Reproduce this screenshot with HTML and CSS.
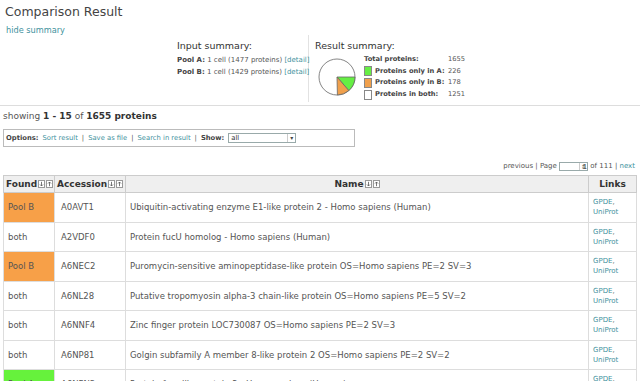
FILE: index.html
```html
<!DOCTYPE html>
<html>
<head>
<link rel="stylesheet" href="styles.css">
<title>Comparison Result</title>
</head>
<body>
<h1 class="title">Comparison Result</h1>
<a class="toggle" href="#">hide summary</a>

<div class="summary">
  <div class="input-summary">
    <h2>Input summary:</h2>
    <p><b>Pool A:</b> 1 cell (1477 proteins) <a href="#">[detail]</a></p>
    <p><b>Pool B:</b> 1 cell (1429 proteins) <a href="#">[detail]</a></p>
  </div>
  <div class="result-summary">
    <h2>Result summary:</h2>
    <div class="result-body">
      <svg class="pie" width="40" height="40" viewBox="0 0 40 40">
        <circle cx="20" cy="20" r="18" fill="#fff" stroke="#666" stroke-width="0.8"/>
        <path d="M20 20 L38 20 A18 18 0 0 1 31.8 33.6 Z" fill="#66ee44" stroke="#666" stroke-width="0.8"/>
        <path d="M20 20 L31.8 33.6 A18 18 0 0 1 20.4 38 Z" fill="#f0a04c" stroke="#666" stroke-width="0.8"/>
      </svg>
      <div class="legend">
        <span class="label">Total proteins:</span><span class="value">1655</span>
        <span class="label"><i class="swatch green"></i>Proteins only in A:</span><span class="value">226</span>
        <span class="label"><i class="swatch orange"></i>Proteins only in B:</span><span class="value">178</span>
        <span class="label"><i class="swatch white"></i>Proteins in both:</span><span class="value">1251</span>
      </div>
    </div>
  </div>
</div>

<div class="showing">showing <b>1 - 15</b> of <b>1655 proteins</b></div>

<div class="options">
  <b>Options:</b>
  <a href="#">Sort result</a><span class="sep">|</span>
  <a href="#">Save as file</a><span class="sep">|</span>
  <a href="#">Search in result</a><span class="sep">|</span>
  <b>Show:</b>
  <span class="select wide">all<span class="drop">&#9662;</span></span>
</div>

<div class="pager">
  previous | Page <span class="select small">1<span class="spin">&#8661;</span></span> of 111 | <a href="#">next</a>
</div>

<table class="results">
  <thead>
    <tr>
      <th class="col-found">Found<span class="sort"><svg width="7" height="8" viewBox="0 0 7 8"><rect x="0.5" y="0.5" width="6" height="7" fill="#fff" stroke="#999"/><path d="M3.5 1.8V6 M2 4.5L3.5 6L5 4.5" fill="none" stroke="#555" stroke-width="0.8"/></svg><svg width="7" height="8" viewBox="0 0 7 8"><rect x="0.5" y="0.5" width="6" height="7" fill="#fff" stroke="#999"/><path d="M3.5 6.2V2 M2 3.5L3.5 2L5 3.5" fill="none" stroke="#555" stroke-width="0.8"/></svg></span></th>
      <th class="col-acc">Accession<span class="sort"><svg width="7" height="8" viewBox="0 0 7 8"><rect x="0.5" y="0.5" width="6" height="7" fill="#fff" stroke="#999"/><path d="M3.5 1.8V6 M2 4.5L3.5 6L5 4.5" fill="none" stroke="#555" stroke-width="0.8"/></svg><svg width="7" height="8" viewBox="0 0 7 8"><rect x="0.5" y="0.5" width="6" height="7" fill="#fff" stroke="#999"/><path d="M3.5 6.2V2 M2 3.5L3.5 2L5 3.5" fill="none" stroke="#555" stroke-width="0.8"/></svg></span></th>
      <th class="col-name">Name<span class="sort"><svg width="7" height="8" viewBox="0 0 7 8"><rect x="0.5" y="0.5" width="6" height="7" fill="#fff" stroke="#999"/><path d="M3.5 1.8V6 M2 4.5L3.5 6L5 4.5" fill="none" stroke="#555" stroke-width="0.8"/></svg><svg width="7" height="8" viewBox="0 0 7 8"><rect x="0.5" y="0.5" width="6" height="7" fill="#fff" stroke="#999"/><path d="M3.5 6.2V2 M2 3.5L3.5 2L5 3.5" fill="none" stroke="#555" stroke-width="0.8"/></svg></span></th>
      <th class="col-links">Links</th>
    </tr>
  </thead>
  <tbody>
    <tr>
      <td class="pool-b">Pool B</td>
      <td class="acc">A0AVT1</td>
      <td>Ubiquitin-activating enzyme E1-like protein 2 - Homo sapiens (Human)</td>
      <td class="links"><a href="#">GPDE</a>,<br><a href="#">UniProt</a></td>
    </tr>
    <tr>
      <td>both</td>
      <td class="acc">A2VDF0</td>
      <td>Protein fucU homolog - Homo sapiens (Human)</td>
      <td class="links"><a href="#">GPDE</a>,<br><a href="#">UniProt</a></td>
    </tr>
    <tr>
      <td class="pool-b">Pool B</td>
      <td class="acc">A6NEC2</td>
      <td>Puromycin-sensitive aminopeptidase-like protein OS=Homo sapiens PE=2 SV=3</td>
      <td class="links"><a href="#">GPDE</a>,<br><a href="#">UniProt</a></td>
    </tr>
    <tr>
      <td>both</td>
      <td class="acc">A6NL28</td>
      <td>Putative tropomyosin alpha-3 chain-like protein OS=Homo sapiens PE=5 SV=2</td>
      <td class="links"><a href="#">GPDE</a>,<br><a href="#">UniProt</a></td>
    </tr>
    <tr>
      <td>both</td>
      <td class="acc">A6NNF4</td>
      <td>Zinc finger protein LOC730087 OS=Homo sapiens PE=2 SV=3</td>
      <td class="links"><a href="#">GPDE</a>,<br><a href="#">UniProt</a></td>
    </tr>
    <tr>
      <td>both</td>
      <td class="acc">A6NP81</td>
      <td>Golgin subfamily A member 8-like protein 2 OS=Homo sapiens PE=2 SV=2</td>
      <td class="links"><a href="#">GPDE</a>,<br><a href="#">UniProt</a></td>
    </tr>
    <tr>
      <td class="pool-a">Pool A</td>
      <td class="acc">A6NFN3</td>
      <td>Protein fam-like protein 2 - Homo sapiens (Human)</td>
      <td class="links"><a href="#">GPDE</a>,<br><a href="#">UniProt</a></td>
    </tr>
  </tbody>
</table>
</body>
</html>
```

FILE: styles.css
```css
body {
  margin: 0;
  font-family: "DejaVu Sans", Verdana, sans-serif;
  color: #555;
  background: #fff;
  overflow: hidden;
}

a {
  color: #3f929e;
  text-decoration: none;
}

.title {
  margin: 3px 0 0 5px;
  font-size: 12.5px;
  line-height: 18px;
  font-weight: normal;
  color: #444;
}

.toggle {
  display: block;
  margin: 3px 0 0 6px;
  font-size: 8.2px;
  line-height: 12px;
}

.summary {
  display: flex;
  margin: -1px 0 0 177px;
  height: 67px;
}

.summary h2 {
  margin: 5px 0 2px 0;
  font-size: 9.5px;
  line-height: 12px;
  font-weight: normal;
  color: #333;
}

.input-summary {
  width: 131px;
  border-right: 1px solid #e2e2e2;
}

.input-summary p {
  margin: 0;
  font-size: 7px;
  line-height: 12px;
  white-space: nowrap;
}

.input-summary b {
  color: #444;
}

.result-summary {
  padding-left: 6px;
}

.result-body {
  display: flex;
  align-items: center;
}

.pie {
  margin: 0 7px 0 2px;
}

.legend {
  display: grid;
  grid-template-columns: 84px auto;
  font-size: 6.7px;
  line-height: 11.6px;
}

.legend .label {
  display: flex;
  align-items: center;
  font-weight: bold;
  color: #444;
  white-space: nowrap;
}

.swatch {
  display: inline-block;
  width: 6px;
  height: 8px;
  margin-right: 3px;
  border: 1px solid #888;
}

.swatch.green { background: #66ee44; }
.swatch.orange { background: #f0a04c; }
.swatch.white { background: #fff; }

.showing {
  margin-top: 3px;
  border-top: 1px solid #ddd;
  padding: 4px 0 0 3px;
  font-size: 9px;
  line-height: 12px;
}

.showing b {
  color: #333;
}

.options {
  display: flex;
  align-items: center;
  width: 348px;
  height: 16px;
  margin: 7px 0 0 3px;
  padding: 0 0 0 2px;
  border: 1px solid #bbb;
  font-size: 6.8px;
  white-space: nowrap;
}

.options b {
  color: #444;
  margin-right: 4px;
}

.options .sep {
  margin: 0 4px;
}

.select {
  position: relative;
  display: inline-block;
  box-sizing: border-box;
  border: 1px solid #9aa;
  background: #fff;
  color: #333;
  line-height: 8px;
  padding-left: 2px;
}

.select.wide {
  width: 68px;
  height: 10px;
}

.select.small {
  width: 29px;
  height: 9px;
  vertical-align: middle;
}

.drop, .spin {
  position: absolute;
  right: 0;
  top: 0;
  bottom: 0;
  width: 7px;
  border-left: 1px solid #ccc;
  font-size: 6px;
  text-align: center;
  color: #444;
}

.pager {
  margin-top: 13px;
  padding-right: 5px;
  text-align: right;
  font-size: 7px;
  line-height: 12px;
}

.results {
  margin: 3px 3px 0 3px;
  width: 634px;
  border-collapse: collapse;
  table-layout: fixed;
  font-size: 8.5px;
}

.results th {
  height: 16px;
  padding: 0 2px;
  background: #efefef;
  border: 1px solid #ccc;
  font-size: 9px;
  color: #333;
  white-space: nowrap;
  overflow: hidden;
}

.results .col-found { width: 46px; text-align: left; }
.results .col-acc { width: 66px; text-align: left; }
.results .col-name { text-align: center; }
.results .col-links { width: 43px; text-align: center; }

.sort {
  display: inline-flex;
  gap: 1px;
  margin-left: 1px;
  vertical-align: -1px;
}

.sort svg {
  display: block;
}

.results td {
  height: 28.5px;
  padding: 0 4px;
  border: 1px solid #ddd;
  white-space: nowrap;
  overflow: hidden;
}

.results td.acc {
  padding-left: 6px;
}

.pool-b {
  background: #f7a048;
}

.pool-a {
  background: #66f23c;
}

.links {
  font-size: 7px;
  line-height: 10px;
}
```
